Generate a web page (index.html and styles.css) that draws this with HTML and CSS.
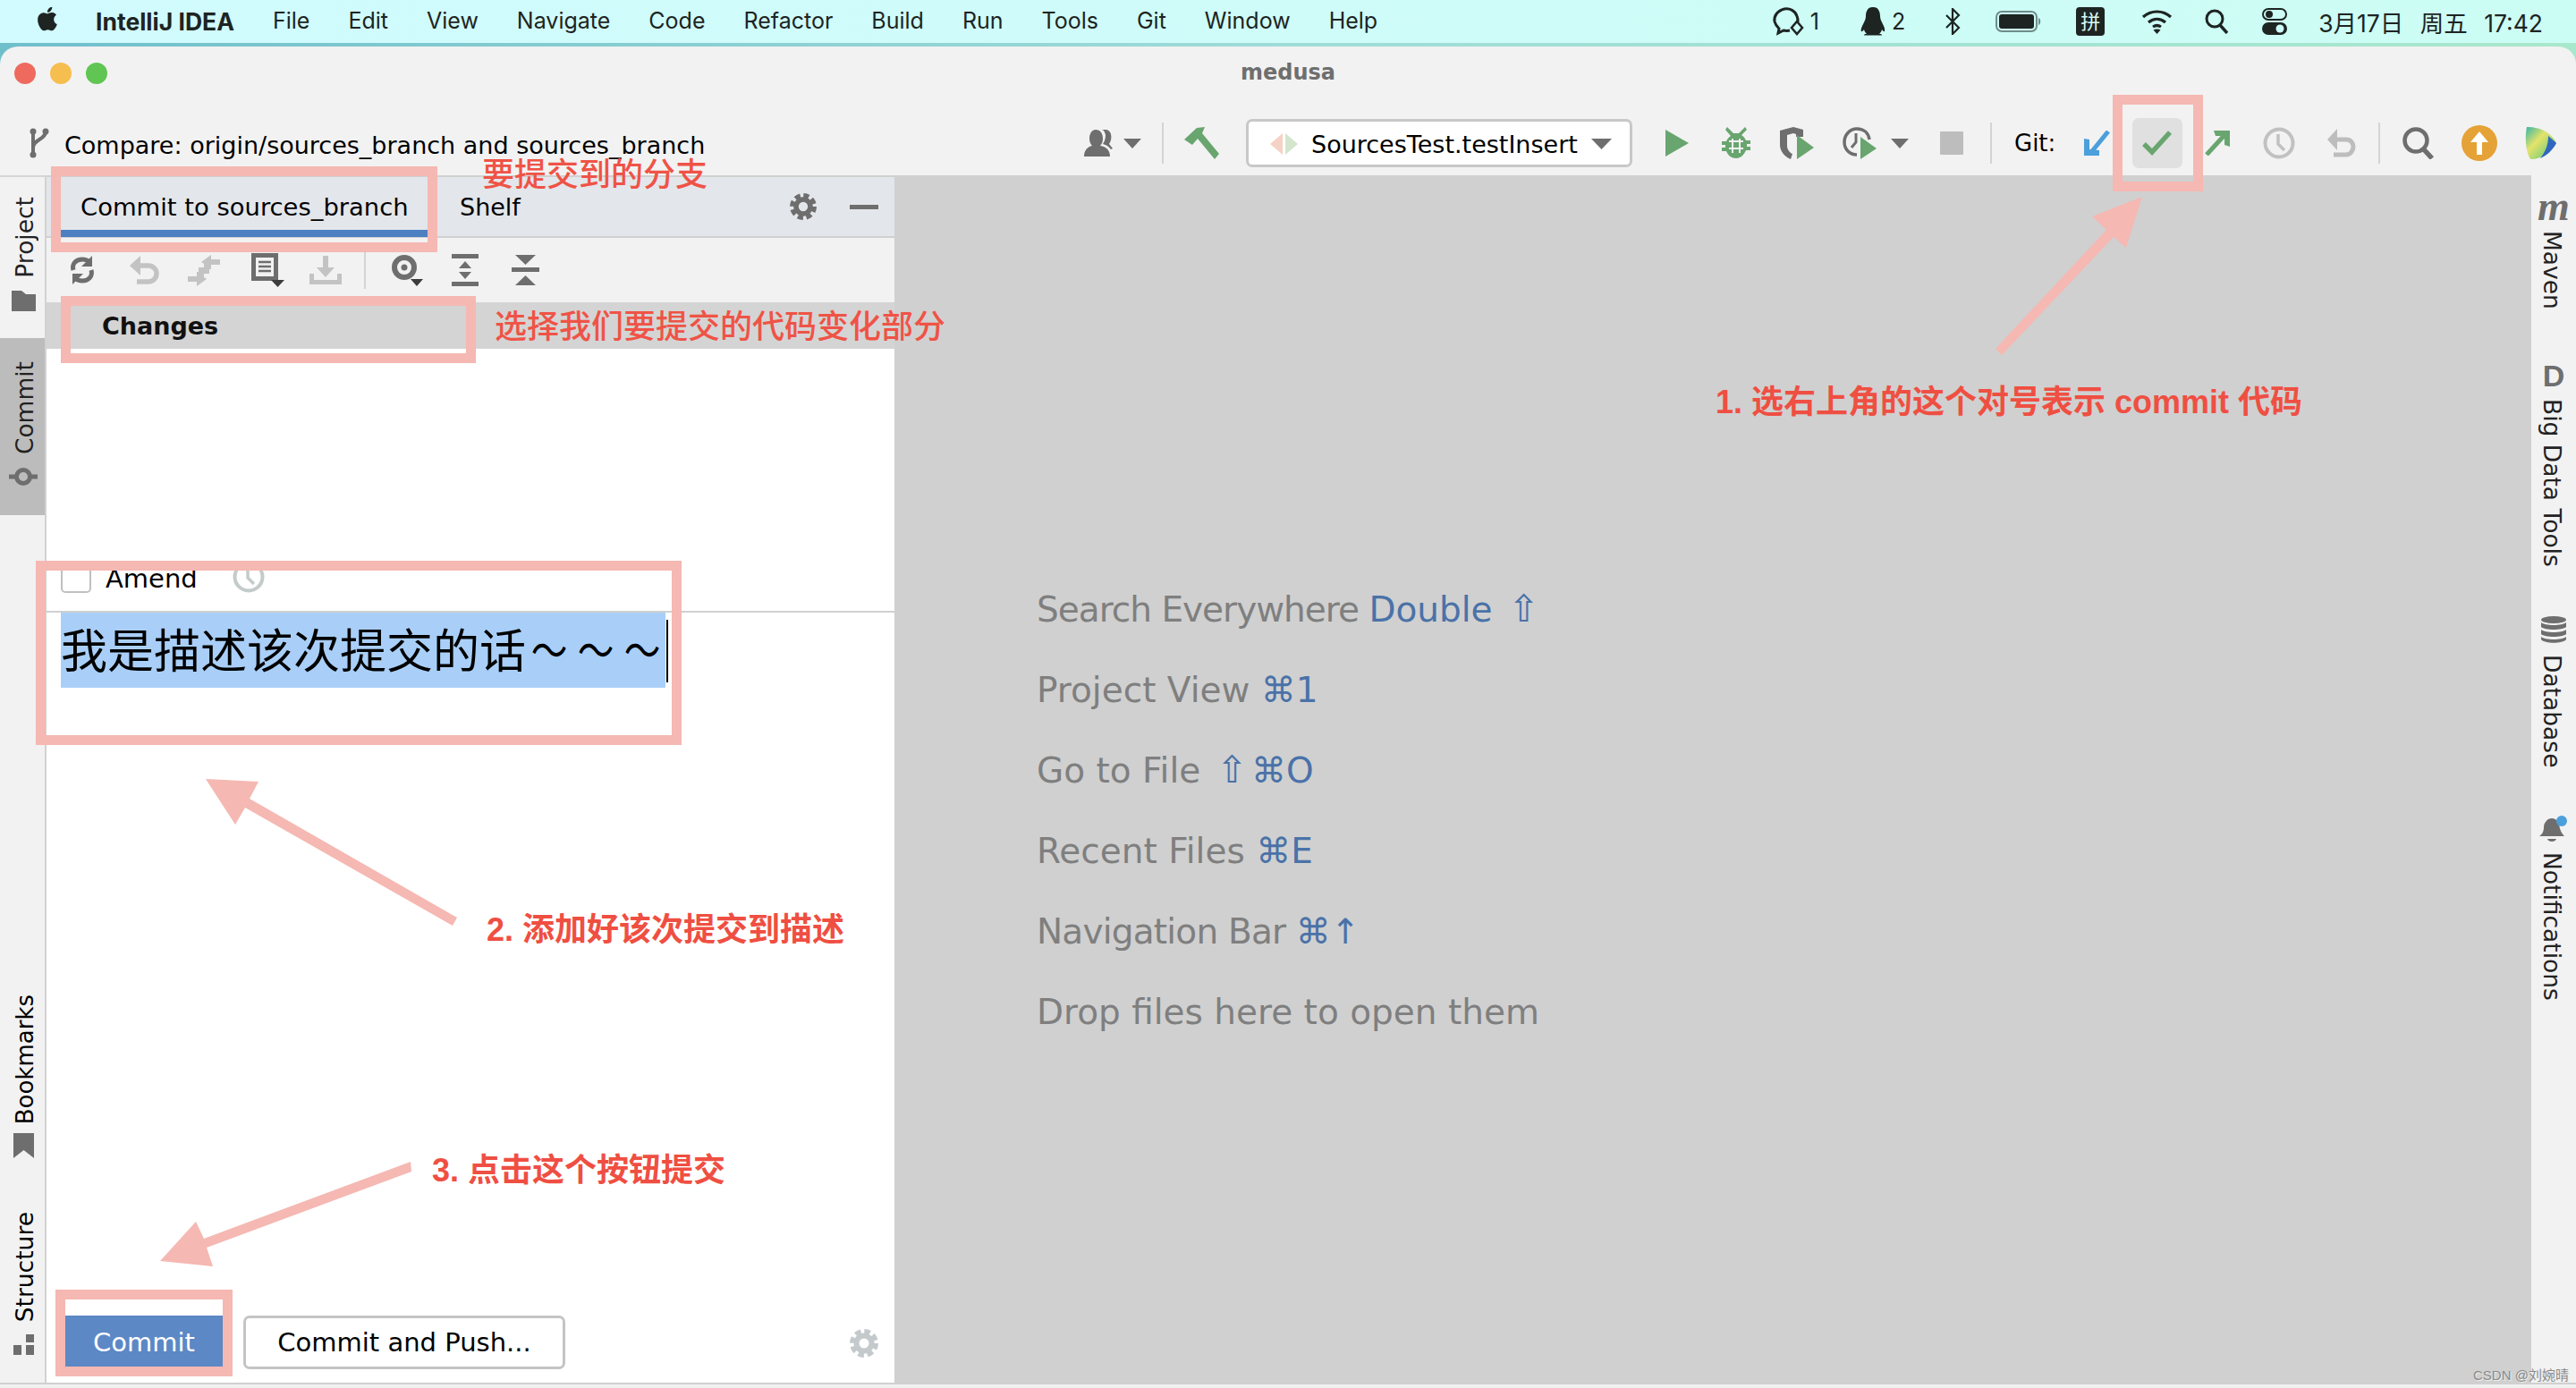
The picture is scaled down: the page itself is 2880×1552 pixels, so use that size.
FILE: index.html
```html
<!DOCTYPE html>
<html lang="zh-CN">
<head>
<meta charset="utf-8">
<title>medusa</title>
<link rel="stylesheet" href="styles.css">
</head>
<body>
<header class="menubar">
  <svg class="apple" viewBox="0 0 24 24" width="32" height="32"><path fill="#1d2422" d="M18.71 19.5c-.83 1.24-1.71 2.45-3.05 2.47-1.34.03-1.77-.79-3.29-.79-1.53 0-2 .77-3.27.82-1.31.05-2.3-1.32-3.14-2.53C4.25 17 2.94 12.45 4.7 9.39c.87-1.52 2.43-2.48 4.12-2.51 1.28-.02 2.5.87 3.29.87.78 0 2.26-1.07 3.81-.91.65.03 2.47.26 3.64 1.98-.09.06-2.17 1.28-2.15 3.81.03 3.02 2.65 4.03 2.68 4.04-.03.07-.42 1.44-1.38 2.83M13 3.5c.73-.83 1.94-1.46 2.94-1.5.13 1.17-.34 2.35-1.04 3.19-.69.85-1.83 1.51-2.95 1.42-.15-1.15.41-2.35 1.05-3.11z"/></svg>
  <nav class="menus">
    <span class="app-name">IntelliJ IDEA</span>
    <span>File</span><span>Edit</span><span>View</span><span>Navigate</span><span>Code</span><span>Refactor</span><span>Build</span><span>Run</span><span>Tools</span><span>Git</span><span>Window</span><span>Help</span>
  </nav>
  <div class="status">
    <svg class="s-chat" width="37" height="34" viewBox="0 0 37 34"><path fill="none" stroke="#1d2422" stroke-width="3" d="M23 24c6-3 7-8 5-13C26 5 20 2 14 3 6 5 2 11 3 17c1 4 3 6 5 8l-1 5 6-3c3 .6 5 .5 7 0"/><path fill="#ccfaf8" stroke="#1d2422" stroke-width="2.5" d="M28 17l6 7-6 7-6-7z"/></svg>
    <span class="s-num">1</span>
    <svg class="s-qq" width="27" height="32" viewBox="0 0 27 32"><path fill="#1d2422" d="M13.5 0C8 0 6 5 6 10c0 3-1 5-3 9-2 4-3 7-2 8 1 .6 2-.6 3-2 .5 2 1.500 3.500 3 4.500-2 .5-3 1-3 2h20c0-1-1-1.500-3-2 1.500-1 2.500-2.500 3-4.500 1 1.400 2 2.600 3 2 1-1 0-4-2-8-2-4-3-6-3-9 0-5-2-10-7.500-10z"/></svg>
    <span class="s-num s-num2">2</span>
    <svg class="s-bt" width="18" height="30" viewBox="0 0 18 30"><path fill="none" stroke="#1d2422" stroke-width="2.200" d="M2 8l14 14-7 7V1l7 7L2 22"/></svg>
    <svg class="s-bat" width="52" height="24" viewBox="0 0 52 24"><rect x="1" y="1" width="45" height="22" rx="6" fill="none" stroke="#6f8c8a" stroke-width="2"/><rect x="4" y="4" width="39" height="16" rx="3" fill="#1d2422"/><path d="M48 8c3 1 3 7 0 8z" fill="#6f8c8a"/></svg>
    <span class="s-ime">拼</span>
    <svg class="s-wifi" width="35" height="28" viewBox="0 0 35 28"><path fill="none" stroke="#1d2422" stroke-width="3.200" d="M2 9c9-8 22-8 31 0M8 15c6-5 13-5 19 0M13 20c3-2 6-2 9 0"/><path fill="#1d2422" d="M17.500 28l-4-4.500c2.500-1.500 5.500-1.500 8 0z"/></svg>
    <svg class="s-find" width="27" height="28" viewBox="0 0 27 28"><circle cx="11" cy="11" r="9" fill="none" stroke="#1d2422" stroke-width="3"/><path stroke="#1d2422" stroke-width="3.400" d="M17 18l8 9"/></svg>
    <svg class="s-ctl" width="28" height="30" viewBox="0 0 28 30"><rect x="1" y="1" width="26" height="12" rx="6" fill="none" stroke="#1d2422" stroke-width="2"/><circle cx="8" cy="7" r="4" fill="#1d2422"/><rect y="16" width="28" height="14" rx="7" fill="#1d2422"/><circle cx="20" cy="23" r="4.500" fill="#ccfaf8"/></svg>
    <span class="clock">3月17日 周五 17:42</span>
  </div>
</header>

<div class="window">
  <div class="titlebar">
    <div class="lights"><i class="dot red"></i><i class="dot yellow"></i><i class="dot green"></i></div>
    <div class="title">medusa</div>
  </div>

  <div class="toolbar">
    <svg class="branch" width="24" height="34" viewBox="0 0 24 34"><g fill="none" stroke="#6e6e6e" stroke-width="4"><path d="M5 4v26"/><path d="M19 4c0 9-14 9-14 18"/></g><circle cx="5" cy="4" r="3.500" fill="#6e6e6e"/><circle cx="19" cy="4" r="3.500" fill="#6e6e6e"/><circle cx="5" cy="30" r="3.500" fill="#6e6e6e"/></svg>
    <div class="compare">Compare: origin/sources_branch and sources_branch</div>
    <div class="tools">
      <svg class="g0" width="35" height="30" viewBox="0 0 35 30"><path fill="#6e6e6e" d="M19 0c3 0 4 2 5 6 0 4-1 7-3 10 4 1 7 3 9 6l2-1-4-5c2-3 3-7 2-11-.5-3-3-5-6-5h-5z"/><path fill="#6e6e6e" d="M13 0c5 0 8 4 8 10 0 3-1 6-3 8 7 1 11 5 11 12H0c0-7 4-11 9-12-2-2-3-5-3-8 0-6 3-10 7-10z"/></svg>
      <svg class="g9 caret" width="20" height="11" viewBox="0 0 20 11"><path fill="#6e6e6e" d="M0 0h20L10 11z"/></svg>
      <i class="vsep g23"></i>
      <svg class="g23" width="39" height="36" viewBox="0 0 39 36"><path fill="#69a56f" d="M0 14L14 1l9-1-3 7 19 23-5 6-19-23-6 7z"/></svg>
      <div class="combo g30">
        <svg width="31" height="24" viewBox="0 0 31 24"><path fill="#f4d3c4" d="M14 0v24L0 12z"/><path fill="#d3e6cd" d="M17 0v24l14-12z"/></svg>
        <span>SourcesTest.testInsert</span>
        <svg width="23" height="12" viewBox="0 0 23 12"><path fill="#6e6e6e" d="M0 0h23L11.500 12z"/></svg>
      </div>
      <svg class="g37" width="26" height="30" viewBox="0 0 26 30"><path fill="#69a56f" d="M0 0l26 15L0 30z"/></svg>
      <svg class="g37" width="32" height="36" viewBox="0 0 32 36"><path fill="#69a56f" d="M6 0l7 7h6l7-7 2 3-6 6c3 2 4 4 5 6h5v4h-4v3h4v4h-5c-2 5-6 9-11 9S7 32 5 27H0v-4h4v-3H0v-4h5c1-2 2-4 5-6L4 3z"/><path fill="#f2f2f2" d="M8 15h16v2H8zM8 23h16v2H8zM11 13h2v16h-2zM19 13h2v16h-2z"/></svg>
      <svg class="g33" width="38" height="36" viewBox="0 0 38 36"><path fill="#6e6e6e" d="M0 4l15-4 11 3v8h-8V8l-3-1-7 2v12c0 4 3 8 6 9l-2 6C5 33 0 27 0 20z"/><path fill="#69a56f" d="M19 9l19 14-19 13z"/></svg>
      <svg class="g32" width="38" height="36" viewBox="0 0 38 36"><path fill="none" stroke="#6e6e6e" stroke-width="3.500" d="M16 31C8 31 2 25 2 17S8 2 16 2s13 5 14 12"/><path fill="none" stroke="#6e6e6e" stroke-width="3" d="M15 7v10l-5 6"/><path fill="#69a56f" d="M20 11l18 13-18 12z"/></svg>
      <svg class="g16 caret" width="20" height="11" viewBox="0 0 20 11"><path fill="#6e6e6e" d="M0 0h20L10 11z"/></svg>
      <svg class="g35" width="26" height="26" viewBox="0 0 26 26"><rect width="26" height="26" rx="1" fill="#bdbdbd"/></svg>
      <i class="vsep g30"></i>
      <span class="git g25">Git:</span>
      <svg class="g32" width="30" height="28" viewBox="0 0 30 28"><path fill="none" stroke="#4b9fdb" stroke-width="5" d="M27 1L9 23"/><path fill="#4b9fdb" d="M0 9l6 1v11l11 1v6H0z"/></svg>
      <span class="hover-btn g24"><svg width="34" height="28" viewBox="0 0 34 28"><path fill="none" stroke="#69a56f" stroke-width="5.500" d="M2 15l9 9L31 2"/></svg></span>
      <svg class="g25" width="28" height="28" viewBox="0 0 28 28"><path fill="none" stroke="#69a56f" stroke-width="5" d="M2 27L23 4"/><path fill="#69a56f" d="M10 0h18v18l-6-2V6H12z"/></svg>
      <svg class="g37" width="36" height="36" viewBox="0 0 36 36"><circle cx="18" cy="18" r="15.500" fill="none" stroke="#c1c1c1" stroke-width="4"/><path fill="none" stroke="#c1c1c1" stroke-width="3.500" d="M17 8v11l7 7"/></svg>
      <svg class="g36" width="32" height="32" viewBox="0 0 32 32"><path fill="none" stroke="#bdbdbd" stroke-width="5" d="M6 12h15c5 0 8 4 8 8s-3 9-8 9H7"/><path fill="#bdbdbd" d="M11 0v24L0 12z"/></svg>
      <i class="vsep g25"></i>
      <svg class="g25" width="36" height="36" viewBox="0 0 36 36"><circle cx="15" cy="15" r="12.500" fill="none" stroke="#6e6e6e" stroke-width="4.500"/><path stroke="#6e6e6e" stroke-width="5.500" d="M22 23l11 12"/></svg>
      <svg class="g30" width="40" height="40" viewBox="0 0 40 40"><circle cx="20" cy="20" r="20" fill="#e5a236"/><path fill="#fff" d="M20 7l10 12h-7v14h-6V19h-7z"/></svg>
      <svg class="g31" width="35" height="36" viewBox="0 0 35 36"><defs><linearGradient id="lg" x1="0" y1="0" x2="1" y2="1"><stop offset="0" stop-color="#37b5a5"/><stop offset=".4" stop-color="#e4e46a"/><stop offset="1" stop-color="#4fc17f"/></linearGradient></defs><path fill="url(#lg)" d="M2 0C20 0 30 8 35 18 29 28 20 36 6 36 0 26 0 10 2 0z"/><path fill="#2f67bf" d="M26 10l9 8c-4 8-11 14-18 17 5-6 9-14 9-25z"/></svg>
    </div>
  </div>

  <div class="workspace">
    <aside class="stripe-left">
      <div class="sl-item sl-project"><span class="vtext">Project</span>
        <svg width="27" height="23" viewBox="0 0 27 23"><path fill="#6e6e6e" d="M0 0h11l5 4h11v19H0z"/></svg></div>
      <div class="sl-item sl-commit"><span class="vtext">Commit</span>
        <svg width="32" height="22" viewBox="0 0 32 22"><path stroke="#6e6e6e" stroke-width="5" d="M0 11h32"/><circle cx="16" cy="11" r="7.500" fill="#bcbcbc" stroke="#6e6e6e" stroke-width="5"/></svg></div>
      <div class="sl-item sl-book"><span class="vtext">Bookmarks</span>
        <svg width="23" height="28" viewBox="0 0 23 28"><path fill="#6e6e6e" d="M0 0h23v28L11.500 19 0 28z"/></svg></div>
      <div class="sl-item sl-struct"><span class="vtext">Structure</span>
        <svg width="23" height="23" viewBox="0 0 23 23"><path fill="#6e6e6e" d="M14 0h9v9h-9zM0 12h9v11H0zM14 12h9v11h-9z"/></svg></div>
    </aside>

    <section class="panel">
      <div class="tabs">
        <div class="tab active">Commit to sources_branch</div>
        <div class="tab shelf">Shelf</div>
        <svg class="tab-gear" width="30" height="32" viewBox="0 0 32 32"><circle cx="16" cy="16" r="13" fill="none" stroke="#6e6e6e" stroke-width="6" stroke-dasharray="6.400 3.800"/><circle cx="16" cy="16" r="8.500" fill="none" stroke="#6e6e6e" stroke-width="6"/></svg>
        <i class="tab-min"></i>
      </div>
      <div class="actions">
        <svg width="30" height="32" viewBox="0 0 30 32"><g fill="none" stroke="#6e6e6e" stroke-width="5"><path d="M5 16C3 9 8 4 15 4c3 0 6 1 8 3"/><path d="M25 16c2 7-3 12-10 12-3 0-6-1-8-3"/></g><path fill="#6e6e6e" d="M26 0v12H14zM4 32V20h12z"/></svg>
        <svg class="ag38" width="33" height="32" viewBox="0 0 33 32"><path fill="none" stroke="#c3c3c3" stroke-width="5.500" d="M8 11h13c5 0 9 4 9 9s-4 9-9 9H8"/><path fill="#c3c3c3" d="M12 0v22L0 11z"/></svg>
        <svg class="ag32" width="36" height="35" viewBox="0 0 36 35"><path fill="#c3c3c3" d="M15 8L26 0v5h10v6H26v5h-2v5h-6V10zM21 27l-11 8v-5H0v-6h10v-5h2v-5h6v11z"/></svg>
        <svg class="ag35" width="38" height="38" viewBox="0 0 38 38"><rect x="0" y="0" width="30" height="31" fill="#6e6e6e"/><rect x="5" y="5" width="20" height="21" fill="#f2f2f2"/><path stroke="#6e6e6e" stroke-width="2.500" d="M8 10h14M8 15h14M8 20h14"/><path fill="#3c3c3c" d="M22 30h15l-7.500 8z"/></svg>
        <svg class="ag27" width="36" height="32" viewBox="0 0 36 32"><path fill="#c3c3c3" d="M15 0h6v13h7L18 24 8 13h7z"/><path fill="#c3c3c3" d="M0 20h5v7h26v-7h5v12H0z"/></svg>
        <i class="vsep ag25 act-sep"></i>
        <svg class="ag26" width="38" height="38" viewBox="0 0 38 38"><circle cx="17" cy="16" r="11" fill="none" stroke="#6e6e6e" stroke-width="6"/><circle cx="17" cy="16" r="3.500" fill="#6e6e6e"/><path fill="#3c3c3c" d="M24 29h14l-7 8z"/></svg>
        <svg class="ag-expand" width="30" height="36" viewBox="0 0 30 36"><path fill="#6e6e6e" d="M0 0h30v5H0zM0 31h30v5H0zM15 8l7 8H8zM8 20h14l-7 8z"/></svg>
        <svg class="ag37" width="31" height="34" viewBox="0 0 31 34"><path fill="#6e6e6e" d="M4 0h23L15.500 11zM0 14h31v5H0zM15.500 23L27 34H4z"/></svg>
      </div>
      <div class="changes">Changes</div>
      <div class="list"></div>
      <div class="amend">
        <i class="checkbox"></i>
        <span class="amend-label">Amend</span>
        <svg width="36" height="36" viewBox="0 0 36 36"><circle cx="18" cy="18" r="15.500" fill="none" stroke="#c4cbcb" stroke-width="4"/><path fill="none" stroke="#c4cbcb" stroke-width="3.500" d="M17 8v11l7 7"/></svg>
      </div>
      <div class="message"><span class="msg-text">我是描述该次提交的话<span class="tilde">～</span><span class="tilde">～</span><span class="tilde">～</span></span><i class="caret-line"></i></div>
      <div class="buttons">
        <button class="btn-commit">Commit</button>
        <button class="btn-push">Commit and Push...</button>
        <svg class="btn-gear" width="32" height="32" viewBox="0 0 32 32"><circle cx="16" cy="16" r="13" fill="none" stroke="#c4c9cc" stroke-width="6" stroke-dasharray="6.400 3.800"/><circle cx="16" cy="16" r="8.500" fill="none" stroke="#c4c9cc" stroke-width="6"/></svg>
      </div>
    </section>

    <main class="welcome">
      <p class="tight">Search Everywhere <b>Double <span class="key">⇧</span></b></p>
      <p>Project View <b>⌘1</b></p>
      <p>Go to File <b><span class="key">⇧</span>⌘O</b></p>
      <p>Recent Files <b>⌘E</b></p>
      <p class="tight2">Navigation Bar <b>⌘↑</b></p>
      <p>Drop files here to open them</p>
    </main>

    <aside class="stripe-right">
      <div class="sr-item sr-maven"><span class="m-icon">m</span><span class="vtext-r">Maven</span></div>
      <div class="sr-item sr-bdt"><span class="d-icon">D</span><span class="vtext-r">Big Data Tools</span></div>
      <div class="sr-item sr-db"><svg width="28" height="30" viewBox="0 0 28 30"><g fill="#6e6e6e"><ellipse cx="14" cy="4" rx="14" ry="4"/><path d="M0 7c4 4 24 4 28 0v5c-4 4-24 4-28 0zM0 15c4 4 24 4 28 0v5c-4 4-24 4-28 0zM0 23c4 4 24 4 28 0v3c-4 5-24 5-28 0z"/></g></svg><span class="vtext-r">Database</span></div>
      <div class="sr-item sr-notif"><svg width="32" height="32" viewBox="0 0 32 32"><path fill="#6e6e6e" d="M0 23c3-2 5-5 5-10S9 3 14 3c4 0 7 3 8 7 1 6 3 10 6 13zM9 26h10c-1 4-9 4-10 0z"/><circle cx="25" cy="6" r="6" fill="#4b9fdb"/></svg><span class="vtext-r">Notifications</span></div>
    </aside>
  </div>
  <footer class="statusline"></footer>
</div>

<svg class="arrows" width="2880" height="1552" viewBox="0 0 2880 1552">
  <path fill="#f5b8b2" d="M2395 220L2377 277 2363 265 2238 397 2231 390 2355 257 2339 242z"/>
  <path fill="#f5b8b2" d="M230 871L289 874 279 893 511 1026 506 1035 274 903 263 922z"/>
  <path fill="#f5b8b2" d="M179 1410L219 1366 228 1385 459 1299 460 1310 231 1395 238 1416z"/>
</svg>

<div class="mark mark-tab"></div>
<div class="mark mark-changes"></div>
<div class="mark mark-msg"></div>
<div class="mark mark-commit"></div>
<div class="mark mark-check"></div>

<div class="note note-branch">要提交到的分支</div>
<div class="note note-changes">选择我们要提交的代码变化部分</div>
<div class="note strong note-1">1. 选右上角的这个对号表示 commit 代码</div>
<div class="note strong note-2">2. 添加好该次提交到描述</div>
<div class="note strong note-3">3. 点击这个按钮提交</div>
<div class="watermark">CSDN @刘婉晴</div>
</body>
</html>
```
FILE: styles.css
```css
* { box-sizing: border-box; }
html, body { margin: 0; padding: 0; }
body {
  width: 2880px; height: 1552px; position: relative; overflow: hidden;
  background: linear-gradient(90deg, #6fbfcb 0%, #9fdcd8 50%, #a8e8cc 100%);
  font-family: "DejaVu Sans", "Noto Sans CJK SC", sans-serif; color: #000;
}

/* macOS menu bar */
.menubar {
  height: 48px; display: flex; align-items: center;
  background: linear-gradient(90deg, #d1fbfe, #ccfdf4);
  font-family: Inter, "Noto Sans CJK SC", sans-serif; color: #1d2422; font-size: 25px;
}
.apple { margin-left: 37px; margin-top: -6px; flex: none; }
.menus { display: flex; margin-left: 38px; }
.menus span { margin-right: 43px; white-space: nowrap; }
.menus .app-name { font-weight: 700; font-size: 26.500px; }
.status { margin-left: auto; display: flex; align-items: center; padding-right: 37px; }
.s-num { margin-left: 6px; }
.s-num2 { margin-left: 8px; }
.s-qq { margin-left: 46px; }
.s-bt { margin-left: 44px; }
.s-bat { margin-left: 39px; }
.s-ime { margin-left: 38px; width: 32px; height: 32px; background: #1d2422; color: #d6fbf6; border-radius: 4px; font-size: 22px; line-height: 32px; text-align: center; }
.s-wifi { margin-left: 41px; }
.s-find { margin-left: 36px; }
.s-ctl { margin-left: 37px; }
.clock { margin-left: 35px; font-size: 26.500px; word-spacing: 11px; white-space: nowrap; }

/* IDE window */
.window {
  position: relative; height: 1500px; margin-top: 4px; background: #f2f2f2;
  border-radius: 20px 20px 0 0; display: flex; flex-direction: column; overflow: hidden;
}
.titlebar { height: 72px; flex: none; position: relative; display: flex; justify-content: center; padding-top: 14px; }
.lights { position: absolute; left: 16px; top: 18px; display: flex; gap: 16px; }
.dot { width: 24px; height: 24px; border-radius: 50%; display: block; }
.red { background: #ee6a5f; }
.yellow { background: #f5be4f; }
.green { background: #61c554; }
.title { font-size: 24px; font-weight: 700; color: #6e6e6e; line-height: 30px; }

.toolbar { height: 72px; flex: none; display: flex; align-items: center; padding-left: 32px; }
.branch { flex: none; }
.compare { margin-left: 16px; font-size: 27px; padding-top: 4px; white-space: nowrap; }
.tools { margin-left: auto; display: flex; align-items: center; padding-right: 22px; }
.tools svg { flex: none; display: block; }
.vsep { display: block; width: 2px; height: 46px; background: #d4d4d4; flex: none; }
.g9 { margin-left: 9px; } .g16 { margin-left: 16px; } .g23 { margin-left: 23px; } .g24 { margin-left: 24px; }
.g25 { margin-left: 25px; } .g30 { margin-left: 30px; } .g31 { margin-left: 31px; } .g32 { margin-left: 32px; }
.g33 { margin-left: 33px; } .g35 { margin-left: 35px; } .g36 { margin-left: 36px; } .g37 { margin-left: 37px; }
.combo {
  width: 432px; height: 54px; background: #fff; border: 3px solid #c8c8c8; border-radius: 7px;
  display: flex; align-items: center; padding: 2px 20px 0 24px; font-size: 27px;
}
.combo span { margin-left: 15px; flex: 1; white-space: nowrap; }
.git { font-size: 26px; width: 46px; white-space: nowrap; }
.hover-btn { width: 56px; height: 56px; background: #e0e0e0; border-radius: 7px; display: flex; align-items: center; justify-content: center; flex: none; }

.workspace { flex: 1; min-height: 0; display: flex; border-bottom: 2px solid #d0d0d0; }

/* left tool stripe */
.stripe-left { width: 52px; flex: none; border-right: 2px solid #d2d2d2; border-top: 2px solid #d6d6d6; display: flex; flex-direction: column; align-items: stretch; background: #f2f2f2; }
.sl-item { display: flex; flex-direction: column; align-items: center; padding-left: 2px; font-size: 26.500px; flex: none; }
.vtext { writing-mode: vertical-rl; transform: rotate(180deg); line-height: 26px; white-space: nowrap; margin-left: 3px; }
.sl-item svg { display: block; flex: none; }
.sl-project { padding-top: 22px; gap: 14px; height: 180px; color: #222; }
.sl-commit { background: #bcbcbc; height: 198px; padding-top: 26px; gap: 14px; color: #222; }
.sl-book { margin-top: auto; gap: 9px; font-size: 26px; }
.sl-struct { margin-top: 60px; gap: 14px; padding-bottom: 31px; }

/* commit panel */
.panel { width: 948px; flex: none; background: #fff; display: flex; flex-direction: column; }
.tabs { height: 70px; flex: none; background: #e3e6eb; border-top: 2px solid #d0d0d0; border-bottom: 2px solid #d0d0d0; display: flex; align-items: center; font-size: 27px; padding-left: 16px; position: relative; }
.tab { white-space: nowrap; }
.tab.active { width: 410px; height: 68px; padding: 19px 0 0 22px; border-bottom: 8px solid #4d7fc3; flex: none; font-size: 27.400px; }
.shelf { margin-left: 36px; }
.tab-gear { margin-left: auto; }
.tab-min { display: block; width: 32px; height: 5px; background: #6e6e6e; margin: 0 18px 0 37px; }
.actions { height: 72px; flex: none; background: #f2f2f2; display: flex; align-items: center; padding-left: 25px; }
.actions svg { flex: none; display: block; }
.ag38 { margin-left: 38px; } .ag32 { margin-left: 32px; } .ag35 { margin-left: 35px; } .ag27 { margin-left: 27px; }
.ag25 { margin-left: 25px; } .ag26 { margin-left: 26px; } .ag-expand { margin-left: 32px; } .ag37 { margin-left: 37px; }
.act-sep { height: 42px; }
.changes { height: 52px; flex: none; background: #d4d4d4; font-weight: 700; font-size: 27px; line-height: 54px; padding: 0 0 0 62px; color: #111; }
.list { flex: 1; min-height: 0; }
.amend { height: 58px; flex: none; display: flex; align-items: flex-start; padding-left: 16px; border-bottom: 2px solid #d0d0d0; font-size: 29px; }
.checkbox { display: block; width: 34px; height: 36px; margin-top: 0; border: 2px solid #c0c0c0; border-radius: 5px; background: #fff; }
.amend-label { margin-left: 16px; line-height: 40px; }
.amend svg { margin-left: 39px; margin-top: 0; }
.message { height: 786px; flex: none; padding-left: 16px; font-family: "Noto Sans CJK SC", sans-serif; font-size: 52px; display: flex; align-items: flex-start; }
.msg-text { display: block; height: 84px; line-height: 80px; width: 676px; background: #a9cff8; white-space: nowrap; overflow: hidden; }
.tilde { display: inline-block; transform: scaleX(.78); }
.caret-line { display: block; width: 2px; height: 70px; background: #000; margin: 8px 0 0 1px; }
.buttons { height: 75px; flex: none; display: flex; align-items: flex-start; padding-left: 21px; font-size: 29px; }
.buttons button { font: inherit; margin: 0; height: 60px; flex: none; cursor: default; }
.btn-commit { width: 176px; background: #5c88c5; color: #fff; border: 0; }
.btn-push { width: 360px; margin-left: 23px !important; background: #fff; color: #000; border: 3px solid #c4c4c4; border-radius: 7px; }
.btn-gear { margin: 15px 18px 0 auto; }

/* welcome area */
.welcome { flex: 1; background: #d0d0d0; padding: 463px 0 0 159px; font-size: 39px; color: #7f7f7f; margin-top: 0; }
.welcome p { margin: 0 0 44px; height: 46px; line-height: 46px; white-space: nowrap; }
.welcome .tight { letter-spacing: -1px; }
.welcome .tight2 { letter-spacing: -.8px; }
.welcome b { font-weight: 400; color: #4a72a8; letter-spacing: 0; }
.key { font-size: 42px; line-height: 40px; margin: 0 4px 0 5px; }

/* right tool stripe */
.stripe-right { width: 50px; flex: none; border-top: 2px solid #f2f2f2; display: flex; flex-direction: column; align-items: center; font-size: 26.500px; background: #f2f2f2; }
.sr-item { display: flex; flex-direction: column; align-items: center; }
.vtext-r { writing-mode: vertical-rl; line-height: 26px; white-space: nowrap; color: #222; margin-right: 5px; }
.m-icon { font-family: "Liberation Serif", serif; font-weight: 700; font-style: italic; font-size: 46px; line-height: 26px; color: #6e6e6e; margin-bottom: 14px; }
.d-icon { font-family: "Liberation Sans", sans-serif; font-weight: 700; font-size: 34px; line-height: 26px; color: #6e6e6e; margin-bottom: 13px; }
.sr-maven { margin-top: 20px; }
.sr-bdt { margin-top: 61px; }
.sr-db { margin-top: 55px; gap: 13px; }
.sr-notif { margin-top: 54px; gap: 9px; }
.statusline { height: 4px; flex: none; background: #f0f0f0; }

/* annotation overlays */
.arrows { position: absolute; left: 0; top: 0; pointer-events: none; }
.mark { position: absolute; border: 11px solid #f5b8b2; }
.mark-tab { left: 57px; top: 186px; width: 432px; height: 96px; }
.mark-changes { left: 68px; top: 331px; width: 464px; height: 75px; }
.mark-msg { left: 40px; top: 627px; width: 722px; height: 206px; }
.mark-commit { left: 62px; top: 1442px; width: 198px; height: 97px; }
.mark-check { left: 2362px; top: 106px; width: 101px; height: 108px; }
.note { position: absolute; font-family: "Liberation Sans", "Noto Sans CJK SC", sans-serif; font-size: 36px; line-height: 44px; color: #ef5346; white-space: nowrap; font-weight: 500; }
.strong { font-weight: 700; color: #ef4f42; }
.note-branch { left: 539px; top: 174px; }
.note-changes { left: 553px; top: 344px; }
.note-1 { left: 1918px; top: 428px; }
.note-2 { left: 544px; top: 1018px; }
.note-3 { left: 483px; top: 1287px; }
.watermark { position: absolute; left: 2765px; top: 1526px; font-family: "Liberation Sans", "Noto Sans CJK SC", sans-serif; font-size: 15px; color: #8a8a8a; text-shadow: 1px 1px 0 #eee; white-space: nowrap; }
```
